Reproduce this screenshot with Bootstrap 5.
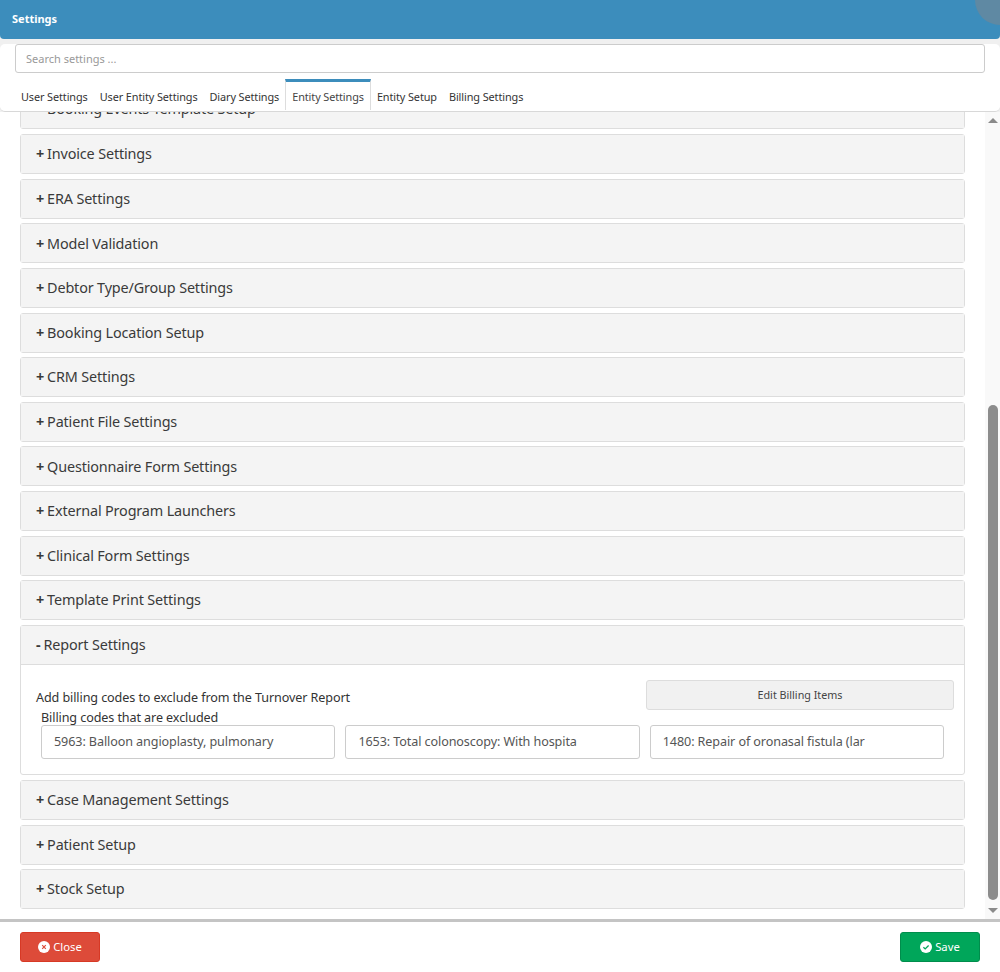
<!DOCTYPE html>
<html lang="en">
<head>
<meta charset="utf-8">
<title>Settings</title>
<link rel="stylesheet" href="https://cdn.jsdelivr.net/npm/bootstrap@5.3.0/dist/css/bootstrap.min.css">
<style>
html,body{height:100%;overflow:hidden}
body{background:#fff;color:#333;font-family:"Noto Sans","Liberation Sans",sans-serif}
.shell{height:972px;width:1000px;background:#f0f0f0}
.topbar{height:39px;background:#3c8dbc;color:#fff;font-weight:700;font-size:11px;padding:0 12px;border-radius:0 0 4px 4px;overflow:hidden}
.topblob{width:50px;height:50px;border-radius:50%;background:#5f89a3;right:-25px;top:-25px}
.headpanel{margin-top:5px;height:68px;background:#fff;border-radius:5px;border-bottom:1px solid #d8d8d8}
.searchbox{margin:1px 15px 0;width:970px;height:29px;font-size:11px;border:1px solid #ccc;border-radius:3px;padding:0 10px;color:#555}
.searchbox::placeholder{color:#999}
.tabstrip{height:31px;margin:6px 0 0;padding-left:15px}
.tabitem{font-size:10.88px;color:#333;padding:10px 6px 0;height:31px;white-space:nowrap;letter-spacing:-.1px}
.tabon{border-top:3px solid #3c8dbc;border-left:1px solid #ddd;border-right:1px solid #ddd;padding:7px 6px 0;background:#fff;color:#444}
.bodyrow{height:807px;background:#fff}
.scrollpane{width:985px;overflow:hidden;padding:0 20px}
.setpanel{width:945px;border:1px solid #ddd;border-radius:3px;margin-bottom:4.62px;background:#fff;flex:none}
.sethead{height:38px;background:#f4f4f4;font-size:14.4px;color:#3a3a3a;padding-left:15px;white-space:nowrap;letter-spacing:-.15px}
.setpanel.first{margin-top:-23px;margin-bottom:5.15px}
.setpanel.openone{margin-bottom:5.1px}
.mk{font-weight:700;margin-right:3px}
.setbody{height:110px;border-top:1px solid #ddd;padding:15px 10px 0 15px;font-size:12.6px}
.rline{height:30px}
.rtext{padding-top:9px;letter-spacing:-.1px;color:#333}
.editbtn{width:308px;height:30px;background:#f1f1f1;border:1px solid #ddd;border-radius:3px;font-size:10.75px;color:#444;padding:0}
.sublabel{margin-left:5px;line-height:15px;letter-spacing:-.1px}
.chips{margin-left:5px;gap:10.2px}
.chipbox{width:294.2px;height:34px;border:1px solid #ccc;border-radius:3px;padding:1px 12px 0;font-size:12.6px;color:#555;overflow:hidden;white-space:nowrap;letter-spacing:-.1px}
.scrolltrack{width:15px;background:#f9f9f9}
.arrowup{width:0;height:0;border-left:5px solid transparent;border-right:5px solid transparent;border-bottom:5px solid #8a8a8a;margin-top:6px}
.arrowdn{width:0;height:0;border-left:5px solid transparent;border-right:5px solid transparent;border-top:5px solid #8a8a8a;margin-bottom:6px}
.thumb{width:10px;height:495px;background:#8c8c8c;border-radius:5px;margin-top:293px}
.footbar{height:53px;background:#fff;border-top:3px solid #c4c4c4;padding:10px 20px 0}
.actbtn{width:80px;height:30px;font-size:11.3px;font-weight:400;color:#fff;border-radius:3px;padding:0;gap:3px}
.btnclose{background:#dd4b39;border:1px solid #d73925}
.btnsave{background:#00a65a;border:1px solid #008d4c}
.ico{width:12px;height:12px}
</style>
</head>
<body>
<div class="shell">
  <div class="topbar d-flex align-items-center position-relative">Settings<span class="topblob position-absolute"></span></div>
  <div class="headpanel">
    <input class="searchbox form-control d-block shadow-none" placeholder="Search settings ...">
    <div class="tabstrip d-flex">
      <div class="tabitem">User Settings</div>
      <div class="tabitem">User Entity Settings</div>
      <div class="tabitem">Diary Settings</div>
      <div class="tabitem tabon">Entity Settings</div>
      <div class="tabitem">Entity Setup</div>
      <div class="tabitem">Billing Settings</div>
    </div>
  </div>
  <div class="bodyrow d-flex">
    <div class="scrollpane d-flex flex-column">
      <div class="setpanel first"><div class="sethead d-flex align-items-center"><span class="mk">+</span>Booking Events Template Setup</div></div>
      <div class="setpanel"><div class="sethead d-flex align-items-center"><span class="mk">+</span>Invoice Settings</div></div>
      <div class="setpanel"><div class="sethead d-flex align-items-center"><span class="mk">+</span>ERA Settings</div></div>
      <div class="setpanel"><div class="sethead d-flex align-items-center"><span class="mk">+</span>Model Validation</div></div>
      <div class="setpanel"><div class="sethead d-flex align-items-center"><span class="mk">+</span>Debtor Type/Group Settings</div></div>
      <div class="setpanel"><div class="sethead d-flex align-items-center"><span class="mk">+</span>Booking Location Setup</div></div>
      <div class="setpanel"><div class="sethead d-flex align-items-center"><span class="mk">+</span>CRM Settings</div></div>
      <div class="setpanel"><div class="sethead d-flex align-items-center"><span class="mk">+</span>Patient File Settings</div></div>
      <div class="setpanel"><div class="sethead d-flex align-items-center"><span class="mk">+</span>Questionnaire Form Settings</div></div>
      <div class="setpanel"><div class="sethead d-flex align-items-center"><span class="mk">+</span>External Program Launchers</div></div>
      <div class="setpanel"><div class="sethead d-flex align-items-center"><span class="mk">+</span>Clinical Form Settings</div></div>
      <div class="setpanel"><div class="sethead d-flex align-items-center"><span class="mk">+</span>Template Print Settings</div></div>
      <div class="setpanel openone">
        <div class="sethead d-flex align-items-center"><span class="mk">-</span>Report Settings</div>
        <div class="setbody">
          <div class="rline d-flex justify-content-between">
            <div class="rtext">Add billing codes to exclude from the Turnover Report</div>
            <button class="editbtn btn" type="button">Edit Billing Items</button>
          </div>
          <div class="sublabel">Billing codes that are excluded</div>
          <div class="chips d-flex">
            <div class="chipbox d-flex align-items-center">5963: Balloon angioplasty, pulmonary</div>
            <div class="chipbox d-flex align-items-center">1653: Total colonoscopy: With hospita</div>
            <div class="chipbox d-flex align-items-center">1480: Repair of oronasal fistula (lar</div>
          </div>
        </div>
      </div>
      <div class="setpanel"><div class="sethead d-flex align-items-center"><span class="mk">+</span>Case Management Settings</div></div>
      <div class="setpanel"><div class="sethead d-flex align-items-center"><span class="mk">+</span>Patient Setup</div></div>
      <div class="setpanel"><div class="sethead d-flex align-items-center"><span class="mk">+</span>Stock Setup</div></div>
    </div>
    <div class="scrolltrack d-flex flex-column align-items-center justify-content-between position-relative">
      <div class="arrowup"></div>
      <div class="thumb position-absolute"></div>
      <div class="arrowdn"></div>
    </div>
  </div>
  <div class="footbar d-flex justify-content-between align-items-start">
    <button class="btn actbtn btnclose d-flex align-items-center justify-content-center" type="button">
      <svg class="ico" viewBox="0 0 12 12"><circle cx="6" cy="6" r="6" fill="#fff"/><path d="M4.2 4.2l3.6 3.6M7.8 4.2L4.2 7.8" stroke="#dd4b39" stroke-width="1.2"/></svg>Close</button>
    <button class="btn actbtn btnsave d-flex align-items-center justify-content-center" type="button">
      <svg class="ico" viewBox="0 0 12 12"><circle cx="6" cy="6" r="6" fill="#fff"/><path d="M3.4 6.2l1.8 1.7 3.4-3.4" fill="none" stroke="#00a65a" stroke-width="1.3"/></svg>Save</button>
  </div>
</div>
<script src="https://cdn.jsdelivr.net/npm/bootstrap@5.3.0/dist/js/bootstrap.bundle.min.js"></script>
</body>
</html>
